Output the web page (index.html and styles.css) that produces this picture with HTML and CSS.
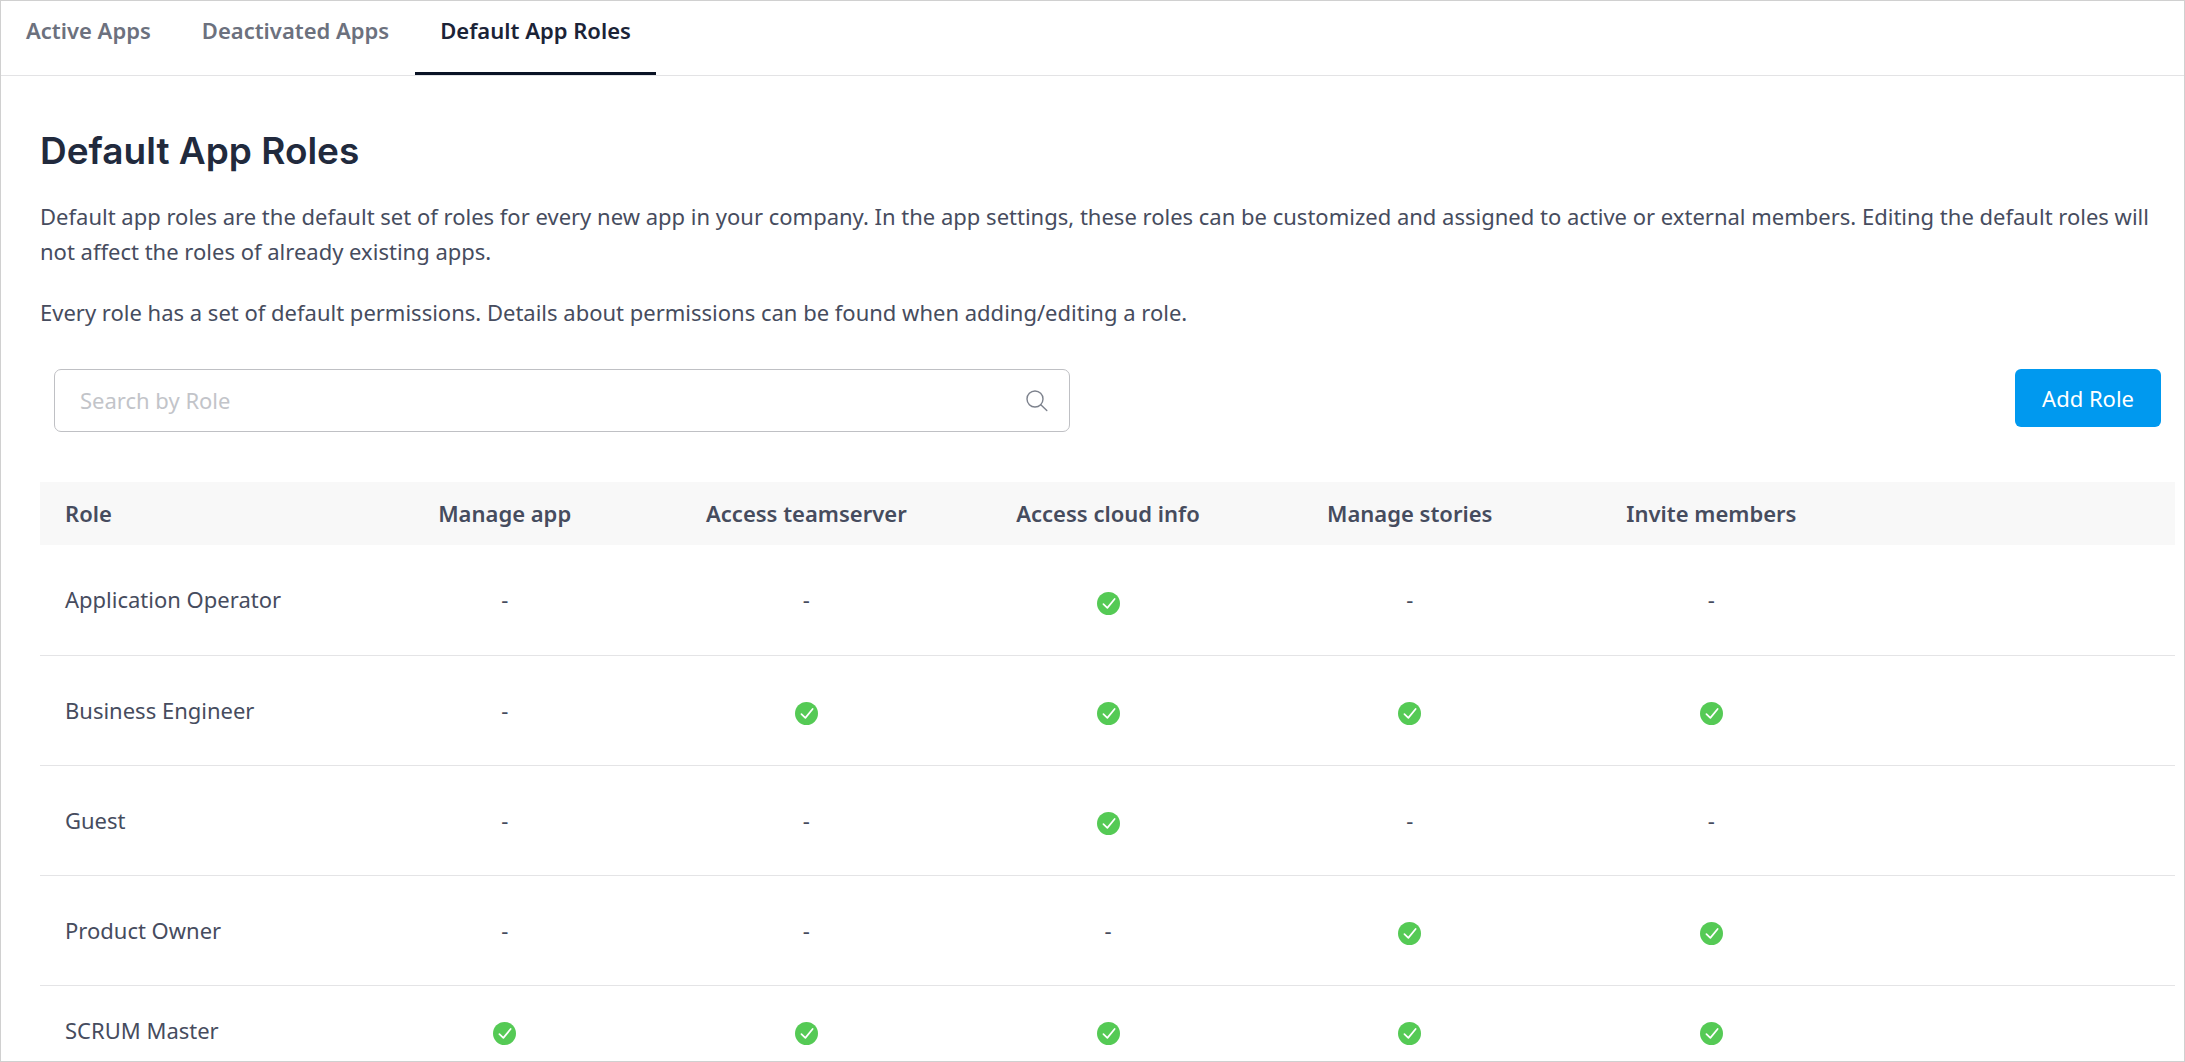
FILE: index.html
```html
<!DOCTYPE html>
<html lang="en">
<head>
<meta charset="utf-8">
<title>Default App Roles</title>
<link rel="stylesheet" href="styles.css">
</head>
<body>
<svg class="sprite" aria-hidden="true">
  <symbol id="check" viewBox="0 0 24 24">
    <circle cx="12" cy="12" r="12" fill="#55ca55"/>
    <path d="M6.7 12.7 10.8 16.6 18.4 7.3" fill="none" stroke="#fff" stroke-width="1.8" stroke-linecap="round" stroke-linejoin="round"/>
  </symbol>
</svg>
<div class="frame">
  <nav class="tabs">
    <a class="tab" href="#active">Active Apps</a>
    <a class="tab" href="#deactivated">Deactivated Apps</a>
    <a class="tab tab-current" href="#roles" aria-current="page">Default App Roles</a>
  </nav>
  <main class="content">
    <h1 class="title">Default App Roles</h1>
    <p class="intro">Default app roles are the default set of roles for every new app in your company. In the app settings, these roles can be customized and assigned to active or external members. Editing the default roles will not affect the roles of already existing apps.</p>
    <p class="intro">Every role has a set of default permissions. Details about permissions can be found when adding/editing a role.</p>
    <div class="toolbar">
      <label class="search">
        <input class="search-input" type="text" placeholder="Search by Role" aria-label="Search by Role">
        <svg class="search-icon" viewBox="0 0 22 22" aria-hidden="true"><g fill="none" stroke="#7d828d" stroke-width="1.4" stroke-linecap="round"><circle cx="9" cy="9" r="8"/><path d="M14.8 14.8 20.8 20.6"/></g></svg>
      </label>
      <button class="add" type="button">Add Role</button>
    </div>
    <table class="roles">
      <colgroup><col class="col-role"><col class="col-perm"><col class="col-perm"><col class="col-perm"><col class="col-perm"><col class="col-perm"><col></colgroup>
      <thead>
        <tr><th scope="col">Role</th><th scope="col">Manage app</th><th scope="col">Access teamserver</th><th scope="col">Access cloud info</th><th scope="col">Manage stories</th><th scope="col">Invite members</th><td></td></tr>
      </thead>
      <tbody>
        <tr><td>Application Operator</td><td>-</td><td>-</td><td><svg class="check"><use href="#check"/></svg></td><td>-</td><td>-</td><td></td></tr>
        <tr><td>Business Engineer</td><td>-</td><td><svg class="check"><use href="#check"/></svg></td><td><svg class="check"><use href="#check"/></svg></td><td><svg class="check"><use href="#check"/></svg></td><td><svg class="check"><use href="#check"/></svg></td><td></td></tr>
        <tr><td>Guest</td><td>-</td><td>-</td><td><svg class="check"><use href="#check"/></svg></td><td>-</td><td>-</td><td></td></tr>
        <tr><td>Product Owner</td><td>-</td><td>-</td><td>-</td><td><svg class="check"><use href="#check"/></svg></td><td><svg class="check"><use href="#check"/></svg></td><td></td></tr>
        <tr><td>SCRUM Master</td><td><svg class="check"><use href="#check"/></svg></td><td><svg class="check"><use href="#check"/></svg></td><td><svg class="check"><use href="#check"/></svg></td><td><svg class="check"><use href="#check"/></svg></td><td><svg class="check"><use href="#check"/></svg></td><td></td></tr>
      </tbody>
    </table>
  </main>
</div>
</body>
</html>
```
FILE: styles.css
```css
* { box-sizing: border-box; }
body {
  margin: 0;
  background: #fff;
  color: #464c5e;
  font: 22px/35px "Noto Sans", sans-serif;
}
.sprite { display: none; }
.frame {
  min-height: 100vh;
  border: 1px solid #d0d0d0;
}
.tabs {
  display: flex;
  gap: 1px;
  border-bottom: 1px solid #e3e3e5;
}
.tab {
  padding: 12px 25px 24px;
  border-bottom: 3px solid transparent;
  color: #6c717e;
  font-weight: 600;
  text-decoration: none;
}
.tab-current {
  border-color: #0a1325;
  color: #1b2337;
}
.content { padding: 48px 9px 0 39px; }
.title {
  margin: 0 0 21px;
  color: #212a3d;
  font: 600 37px/54px Inter, sans-serif;
}
.intro {
  margin: 0 12px 26px 0;
}
.toolbar {
  display: flex;
  align-items: flex-start;
  justify-content: space-between;
  padding: 13px 14px 0 14px;
}
.search {
  display: flex;
  align-items: center;
  width: 48.2%;
  height: 63px;
  padding: 0 21px 0 25px;
  border: 1px solid #bfc0c4;
  border-radius: 7px;
}
.search-input {
  flex: 1;
  min-width: 0;
  padding: 0;
  border: 0;
  outline: 0;
  background: none;
  color: inherit;
  font: inherit;
}
.search-input::placeholder { color: #c2c4c9; opacity: 1; }
.search-icon { width: 22px; height: 22px; }
.add {
  height: 58px;
  padding: 0 27px;
  border: 0;
  border-radius: 6px;
  background: #0099ef;
  color: #fff;
  font: inherit;
}
.roles {
  width: 100%;
  margin-top: 50px;
  border-collapse: collapse;
  table-layout: fixed;
}
.col-role { width: 14.7%; }
.col-perm { width: 14.13%; }
.roles th, .roles td {
  padding: 0;
  text-align: center;
}
.roles th:first-child, .roles td:first-child {
  padding-left: 25px;
  text-align: left;
}
.roles thead tr { height: 63px; background: #f8f8f8; }
.roles th { font-weight: 600; }
.roles tbody tr { height: 110px; border-bottom: 1px solid #e4e4e6; }
.roles tbody tr:last-child { height: 74px; border-bottom: 0; }
.roles tbody tr:last-child td { padding-top: 16px; }
.check {
  display: block;
  width: 23px;
  height: 23px;
  margin: 7px auto 0;
}
```
